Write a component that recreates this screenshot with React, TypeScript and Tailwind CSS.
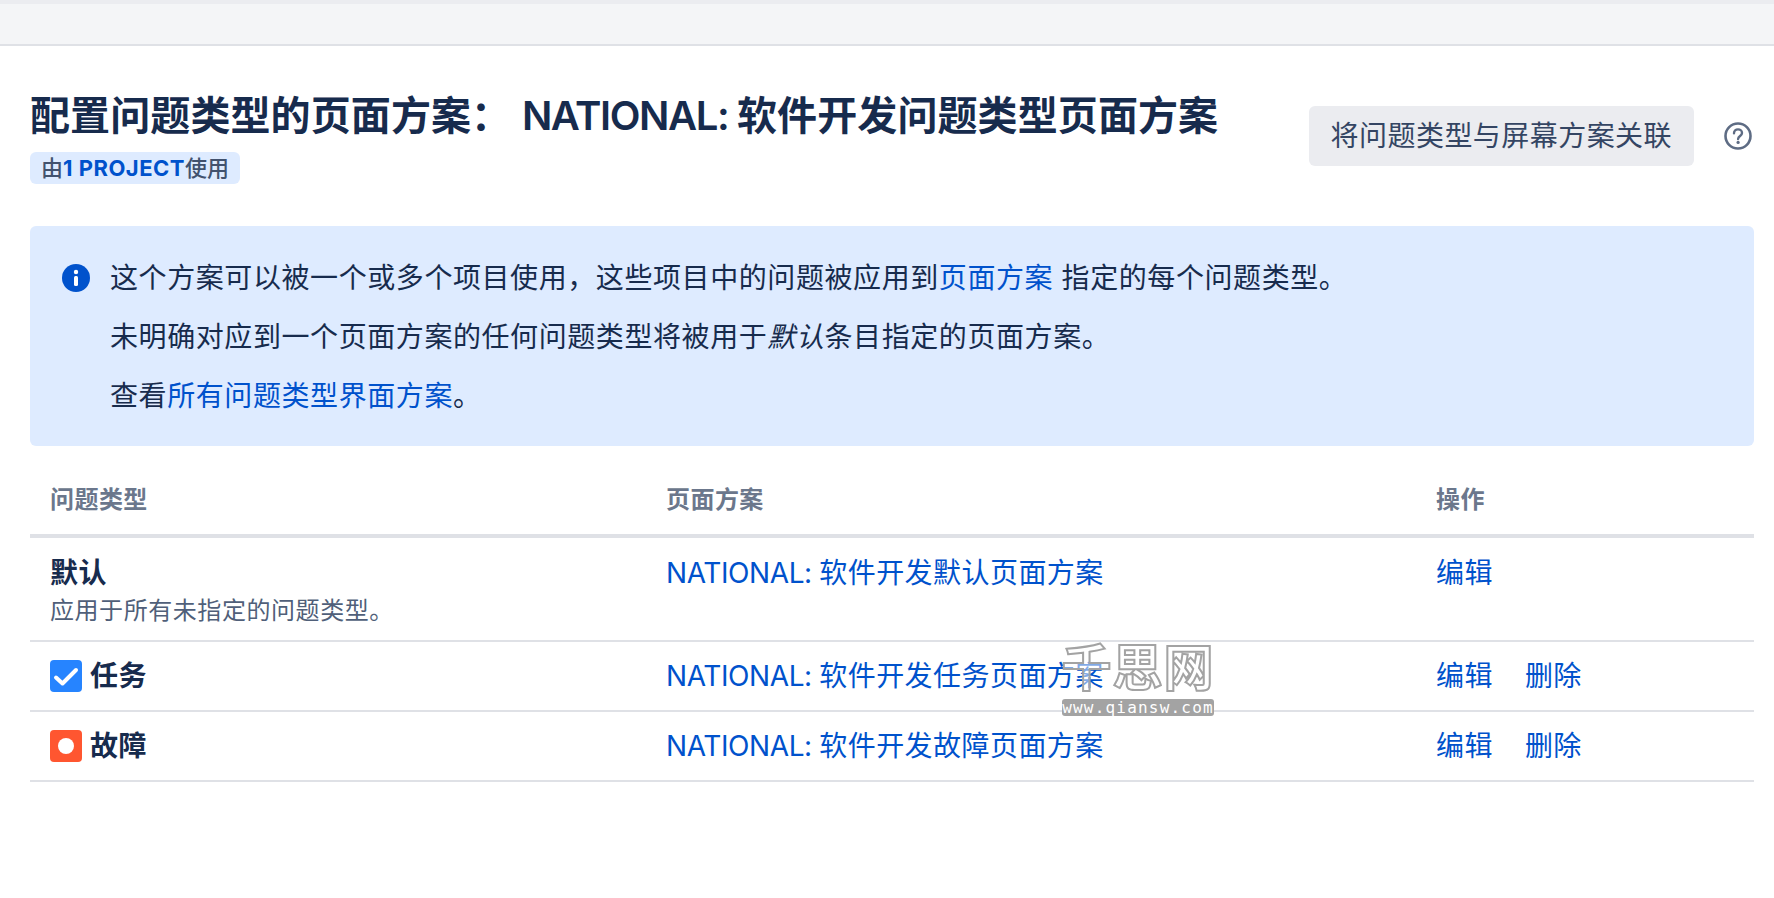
const FONT = "font-['Inter','Noto_Sans_CJK_SC',sans-serif]";

function InfoIcon() {
  return (
    <svg width="28" height="28" viewBox="0 0 28 28" className="shrink-0">
      <circle cx="14" cy="14" r="14" fill="#0052cc" />
      <rect x="12" y="12" width="4" height="10" rx="1.5" fill="#fff" />
      <circle cx="14" cy="8" r="2.2" fill="#fff" />
    </svg>
  );
}

function HelpIcon() {
  return (
    <svg width="30" height="30" viewBox="0 0 30 30" className="shrink-0" fill="none">
      <circle cx="15" cy="15" r="12.5" stroke="#5e6c84" strokeWidth="2.6" />
      <path d="M11 12.2c0-2.3 1.8-3.8 4-3.8s4 1.5 4 3.6c0 3-3.7 3-3.9 6" stroke="#5e6c84" strokeWidth="2.4" strokeLinecap="round" />
      <circle cx="15.1" cy="21.4" r="1.6" fill="#5e6c84" />
    </svg>
  );
}

function TaskIcon() {
  return (
    <svg width="32" height="32" viewBox="0 0 32 32" className="shrink-0">
      <rect width="32" height="32" rx="4" fill="#2684ff" />
      <path d="M6 17.5l6.5 6L26 10" fill="none" stroke="#fff" strokeWidth="4" strokeLinecap="round" strokeLinejoin="round" />
    </svg>
  );
}

function BugIcon() {
  return (
    <svg width="32" height="32" viewBox="0 0 32 32" className="shrink-0">
      <rect width="32" height="32" rx="4" fill="#ff5630" />
      <circle cx="16" cy="16" r="8" fill="#fff" />
    </svg>
  );
}

const link = "text-[#0052cc]";

function Scheme({ name }: { name: string }) {
  return (
    <>
      <span className="tracking-[-0.4px]">NATIONAL: </span>
      {name}
    </>
  );
}

function TypeRow({ icon, name, scheme }: { icon: React.ReactNode; name: string; scheme: string }) {
  return (
    <tr className="border-b-2 border-[#dfe1e6]">
      <td className="h-[70px] pl-5 align-middle">
        <div className="flex items-center gap-2">
          {icon}
          <span className="font-semibold text-[#172b4d]">{name}</span>
        </div>
      </td>
      <td className={`pl-5 align-middle ${link}`}>
        <Scheme name={scheme} />
      </td>
      <td className={`pl-5 align-middle ${link}`}>
        <span className="flex gap-8">
          <span>编辑</span>
          <span>删除</span>
        </span>
      </td>
    </tr>
  );
}

export default function App() {
  return (
    <div className={`relative min-h-[898px] bg-white ${FONT} text-[28px] leading-10 tracking-[0.45px] text-[#172b4d]`}>
      <div className="h-[46px] border-t-4 border-b-2 border-t-[#ebecf0] border-b-[#dfe1e6] bg-[#f4f5f7]" />

      <div className="pr-5 pl-[30px]">
        <div className="flex items-start justify-between pt-[46px]">
          <div>
            <h1 className="text-[40px] leading-12 font-semibold tracking-[0.1px] text-[#172b4d]">
              配置问题类型的页面方案：<span className="ml-[2px] tracking-[-1.4px]"> NATIONAL: </span>软件开发问题类型页面方案
            </h1>
            <div className="mt-[12px] inline-flex h-8 items-center rounded-md bg-[#deebff] px-[11px] text-[22px] leading-6 font-medium tracking-normal text-[#42526e]">
              由<span className="font-bold tracking-[0.5px] text-[#0052cc]">1 PROJECT</span>使用
            </div>
          </div>
          <div className="flex items-center gap-[29px] pt-[14px] pr-[1px]">
            <button className="h-[60px] rounded-md bg-[#ebecf0] px-[22px] text-[28px] text-[#344563]">
              将问题类型与屏幕方案关联
            </button>
            <HelpIcon />
          </div>
        </div>

        <div className="mt-[40px] flex gap-[20px] rounded-md bg-[#deebff] px-8 pt-[32px] pb-[30px] tracking-[0.58px]">
          <div className="pt-[6px]">
            <InfoIcon />
          </div>
          <div className="flex flex-col gap-[19px]">
            <p>
              这个方案可以被一个或多个项目使用，这些项目中的问题被应用到<span className={link}>页面方案</span> 指定的每个问题类型。
            </p>
            <p>
              未明确对应到一个页面方案的任何问题类型将被用于<em>默认</em>条目指定的页面方案。
            </p>
            <p>
              查看<span className={link}>所有问题类型界面方案</span>。
            </p>
          </div>
        </div>

        <table className="w-full table-fixed border-collapse">
          <colgroup>
            <col className="w-[616px]" />
            <col className="w-[770px]" />
            <col />
          </colgroup>
          <thead>
            <tr className="border-b-4 border-[#dfe1e6] text-left text-[24px] text-[#6b778c]">
              <th className="h-[90px] pt-[19px] pl-5 font-semibold">问题类型</th>
              <th className="pt-[19px] pl-5 font-semibold">页面方案</th>
              <th className="pt-[19px] pl-5 font-semibold">操作</th>
            </tr>
          </thead>
          <tbody>
            <tr className="border-b-2 border-[#dfe1e6]">
              <td className="h-[105px] pt-[15px] pl-5 align-top">
                <div className="font-bold text-[#172b4d]">默认</div>
                <div className="text-[24px] leading-9 tracking-[0.56px] text-[#505f79]">应用于所有未指定的问题类型。</div>
              </td>
              <td className={`pt-[15px] pl-5 align-top ${link}`}>
                <Scheme name="软件开发默认页面方案" />
              </td>
              <td className={`pt-[15px] pl-5 align-top ${link}`}>编辑</td>
            </tr>
            <TypeRow icon={<TaskIcon />} name="任务" scheme="软件开发任务页面方案" />
            <TypeRow icon={<BugIcon />} name="故障" scheme="软件开发故障页面方案" />
          </tbody>
        </table>
      </div>

      <div className="absolute top-[640px] left-[1062px] flex w-[152px] flex-col items-center">
        <div className="text-[50px] leading-[56px] font-bold tracking-[1px] whitespace-nowrap text-white/50 [-webkit-text-stroke:2px_#a3a3a3]">
          千思网
        </div>
        <div className="mt-[3px] h-[17px] w-full rounded-[3px] bg-[#a3a3a3] text-center font-['DejaVu_Sans_Mono',monospace] text-[16px] leading-[17px] tracking-[1.2px] whitespace-nowrap text-white">
          www.qiansw.com
        </div>
      </div>
    </div>
  );
}
